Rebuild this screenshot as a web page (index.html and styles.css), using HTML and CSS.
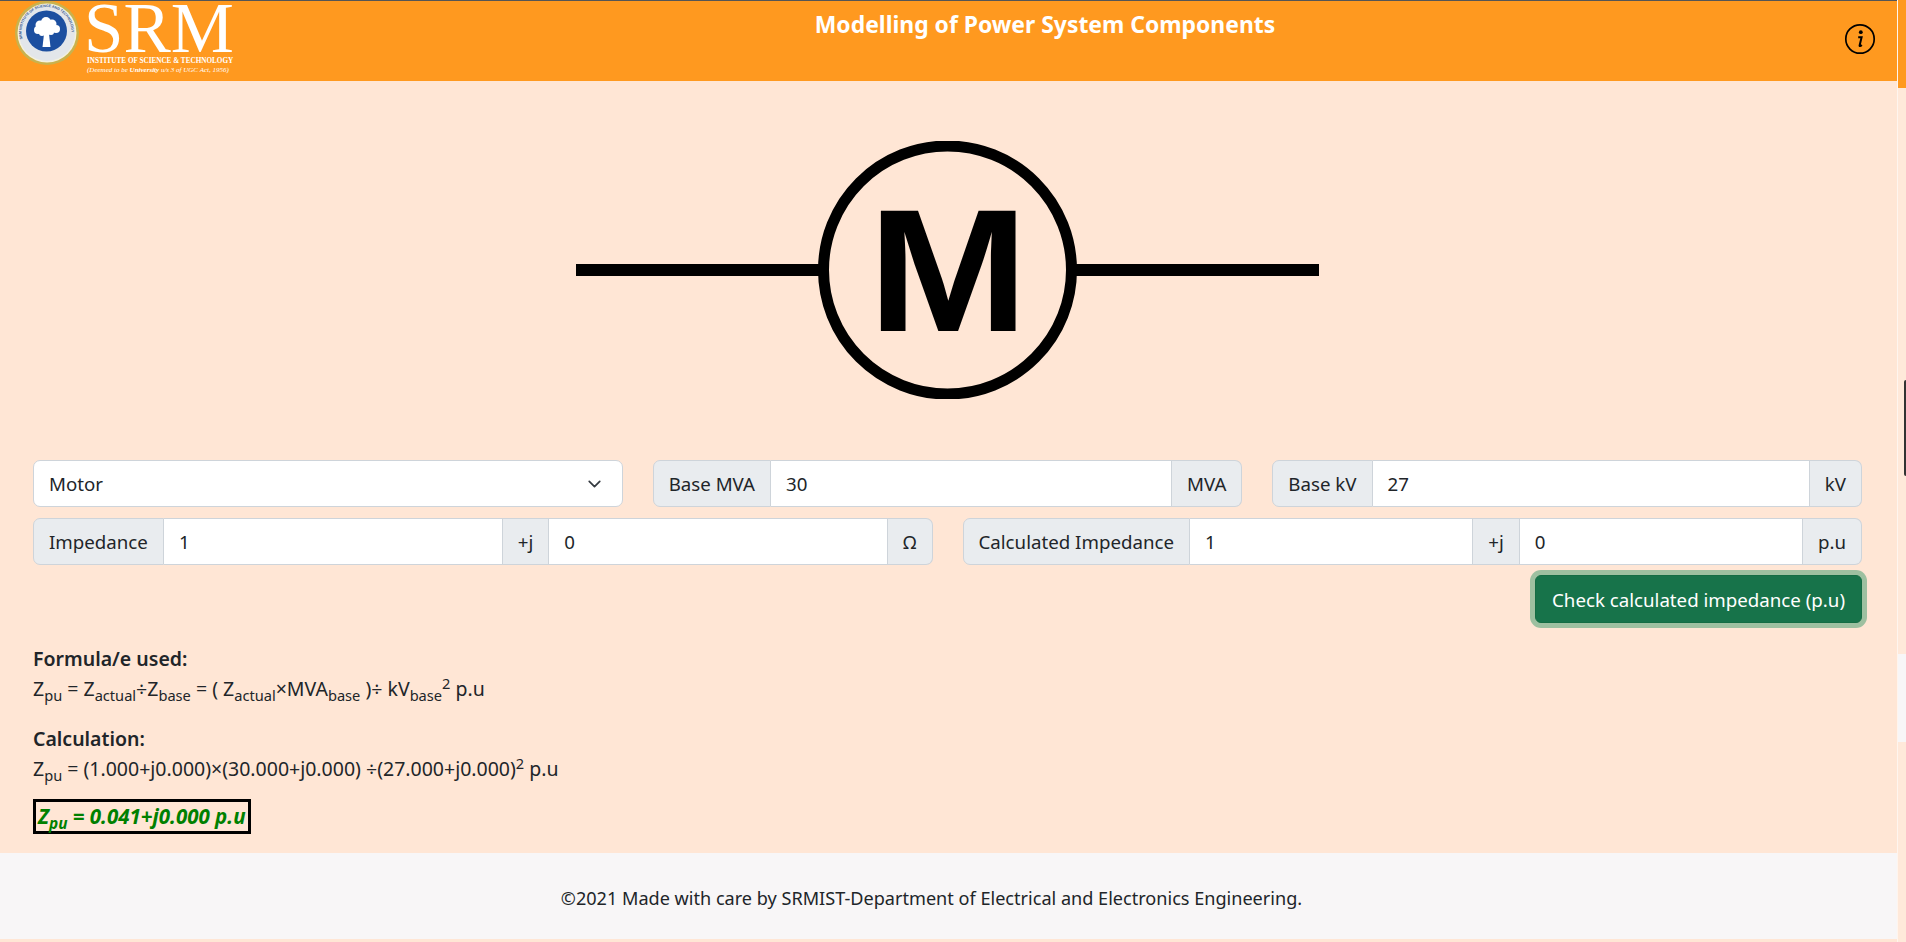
FILE: index.html
```html
<!DOCTYPE html>
<html lang="en">
<head>
    <meta charset="UTF-8">
    <meta name="viewport" content="width=device-width, initial-scale=1.0">
    <title>Modelling of Power System Components</title>
    <link rel="stylesheet" href="styles.css">
</head>
<body>
    <div class="page">
        <header class="topbar">
            <div class="logo">
                <svg class="seal" width="66" height="66" viewBox="0 0 66 66">
                    <defs>
                        <path id="seal-ring" d="M8.500 38a25 25 0 1 1 48 0"/>
                    </defs>
                    <circle cx="33" cy="32" r="32" fill="#c9b24e"/>
                    <circle cx="33" cy="32" r="29.500" fill="#f4f1df"/>
                    <circle cx="33" cy="32" r="28" fill="#e3e6ea"/>
                    <text class="seal-text"><textPath href="#seal-ring">SRM INSTITUTE OF SCIENCE AND TECHNOLOGY</textPath></text>
                    <circle cx="32.500" cy="30" r="20.500" fill="#1c4fa0"/>
                    <path d="M30 33h5l1.500 13h-8z" fill="#ffffff"/>
                    <g fill="#ffffff">
                        <circle cx="24" cy="29" r="4"/>
                        <circle cx="26" cy="24" r="4.500"/>
                        <circle cx="32" cy="21" r="5"/>
                        <circle cx="38" cy="23" r="4.500"/>
                        <circle cx="42" cy="28" r="4"/>
                        <circle cx="33" cy="27" r="7"/>
                        <circle cx="37" cy="31" r="3"/>
                        <circle cx="28" cy="32" r="3"/>
                    </g>
                </svg>
                <div class="wordmark">
                    <div class="wordmark-srm">SRM</div>
                    <div class="wordmark-inst">INSTITUTE OF SCIENCE &amp; TECHNOLOGY</div>
                    <div class="wordmark-note">(Deemed to be <b>University</b> u/s 3 of UGC Act, 1956)</div>
                </div>
            </div>
            <h1 class="title">Modelling of Power System Components</h1>
            <svg class="info" width="32" height="32" viewBox="0 0 32 32">
                <circle cx="16" cy="16" r="14.200" fill="none" stroke="#000" stroke-width="1.700"/>
                <circle cx="16.800" cy="9.200" r="1.900" fill="#000"/>
                <path d="M14.200 14.200h3.400l-2 8.200c-.2.9.7 1 2.200-.4" fill="none" stroke="#000" stroke-width="2"/>
            </svg>
        </header>

        <main class="content">
            <svg class="diagram" width="743" height="258" viewBox="0 0 743 258">
                <rect x="0" y="123" width="243" height="12" fill="#000"/>
                <rect x="500" y="123" width="243" height="12" fill="#000"/>
                <circle cx="371.500" cy="129" r="124" fill="none" stroke="#000" stroke-width="11"/>
                <text class="diagram-letter" transform="translate(292 190) scale(1.100 1)">M</text>
            </svg>

            <div class="row row-three">
                <select class="field-select">
                    <option>Motor</option>
                </select>
                <div class="input-group">
                    <span class="addon">Base MVA</span>
                    <input type="text" value="30">
                    <span class="addon">MVA</span>
                </div>
                <div class="input-group">
                    <span class="addon">Base kV</span>
                    <input type="text" value="27">
                    <span class="addon">kV</span>
                </div>
            </div>

            <div class="row row-two">
                <div class="input-group">
                    <span class="addon">Impedance</span>
                    <input type="text" value="1">
                    <span class="addon">+j</span>
                    <input type="text" value="0">
                    <span class="addon">Ω</span>
                </div>
                <div class="input-group">
                    <span class="addon">Calculated Impedance</span>
                    <input type="text" value="1">
                    <span class="addon">+j</span>
                    <input type="text" value="0">
                    <span class="addon">p.u</span>
                </div>
            </div>

            <div class="actions">
                <button class="btn-check">Check calculated impedance (p.u)</button>
            </div>

            <section class="working">
                <p class="working-head">Formula/e used:</p>
                <p class="working-line">Z<sub>pu</sub> = Z<sub>actual</sub>÷Z<sub>base</sub> = ( Z<sub>actual</sub>×MVA<sub>base</sub> )÷ kV<sub>base</sub><sup>2</sup> p.u</p>
                <p class="working-head second">Calculation:</p>
                <p class="working-line">Z<sub>pu</sub> = (1.000+j0.000)×(30.000+j0.000) ÷(27.000+j0.000)<sup>2</sup> p.u</p>
                <p class="result">Z<sub>pu</sub> = 0.041+j0.000 p.u</p>
            </section>
        </main>

        <footer class="footer">©2021 Made with care by SRMIST-Department of Electrical and Electronics Engineering.</footer>
    </div>

    <div class="rail">
        <div class="rail-top"></div>
        <div class="rail-thumb"></div>
        <div class="rail-patch"></div>
    </div>
</body>
</html>
```

FILE: styles.css
```css
html, body {
    height: 100%;
}
body {
    margin: 0;
    display: flex;
    height: 942px;
    overflow: hidden;
    background-color: #ffe6d5;
    color: #212529;
    font-family: "Noto Sans", Arial, sans-serif;
    font-size: 18.7px;
}
.page {
    width: 1897px;
    flex: none;
    display: flex;
    flex-direction: column;
}

/* top bar */
.topbar {
    display: flex;
    align-items: flex-start;
    height: 80px;
    border-top: 1px solid #555555;
    background-color: #ff991f;
}
.logo {
    display: flex;
    flex: none;
    width: 233px;
    padding-left: 14px;
    box-sizing: border-box;
    gap: 7px;
}
.seal {
    flex: none;
}
.seal-text {
    fill: #35568f;
    font-family: "Liberation Sans", Arial, sans-serif;
    font-size: 3.600px;
    font-weight: bold;
}
.wordmark {
    padding-top: 1px;
    color: #ffffff;
    font-family: "Liberation Serif", serif;
    white-space: nowrap;
}
.wordmark-srm {
    height: 53px;
    margin-left: -3px;
    font-size: 71px;
    line-height: 53px;
}
.wordmark-inst {
    margin-top: 1px;
    font-size: 7.200px;
    font-weight: bold;
    line-height: 10px;
}
.wordmark-note {
    font-size: 7px;
    font-style: italic;
    line-height: 9px;
}
.title {
    flex: 1;
    margin: 9px 0 0;
    padding-left: 13px;
    text-align: center;
    color: #ffffff;
    font-size: 22.900px;
    font-weight: 700;
    line-height: 29px;
}
.info {
    flex: none;
    margin: 22px 21px 0 0;
}

/* main */
.content {
    flex: 1;
    padding: 60px 35px 0 33px;
}
.diagram {
    display: block;
    margin: 0 0 61px 543px;
}
.diagram-letter {
    font-family: "Liberation Sans", Arial, sans-serif;
    font-weight: bold;
    font-size: 175px;
}
.row {
    display: grid;
    column-gap: 30px;
    margin-bottom: 11px;
}
.row-three {
    grid-template-columns: 1fr 1fr 1fr;
}
.row-two {
    grid-template-columns: 1fr 1fr;
}
.field-select {
    height: 47px;
    padding: 0 15px;
    border: 1px solid #ced4da;
    border-radius: 7px;
    background-color: #ffffff;
    background-image: url("data:image/svg+xml,%3csvg xmlns='http://www.w3.org/2000/svg' viewBox='0 0 16 16'%3e%3cpath fill='none' stroke='%23343a40' stroke-linecap='round' stroke-linejoin='round' stroke-width='2' d='M2 5l6 6 6-6'/%3e%3c/svg%3e");
    background-repeat: no-repeat;
    background-position: right 18px center;
    background-size: 19px 14px;
    appearance: none;
    color: #212529;
    font: inherit;
}
.input-group {
    display: flex;
    height: 47px;
    min-width: 0;
}
.input-group input {
    flex: 1;
    min-width: 0;
    padding: 0 15px;
    border: 1px solid #ced4da;
    border-left: 0;
    border-radius: 0;
    background-color: #ffffff;
    color: #212529;
    font: inherit;
}
.addon {
    display: flex;
    align-items: center;
    flex: none;
    padding: 0 15px;
    border: 1px solid #ced4da;
    border-left: 0;
    background-color: #e9ecef;
    white-space: nowrap;
}
.addon:first-child {
    border-left: 1px solid #ced4da;
    border-radius: 7px 0 0 7px;
}
.addon:last-child {
    border-radius: 0 7px 7px 0;
}
.actions {
    display: flex;
    justify-content: flex-end;
    margin-top: -1px;
}
.btn-check {
    height: 48px;
    padding: 0 16px;
    border: 1px solid #146c43;
    border-radius: 6px;
    background-color: #17734a;
    box-shadow: 0 0 0 5px #9dc0a0;
    color: #ffffff;
    font: inherit;
}

/* working */
.working {
    margin-top: 21px;
    font-size: 19.500px;
}
.working p {
    margin: 0;
}
.working-head {
    font-weight: 600;
    line-height: 29px;
}
.working-head.second {
    margin-top: 20px;
}
.working p.working-line {
    margin-top: 1px;
    line-height: 30px;
}
.working-line sub, .working-line sup, .result sub {
    font-size: 75%;
    line-height: 0;
}
.working p.result {
    display: inline-block;
    margin-top: 15px;
    padding: 0 2px;
    border: 3px solid #000000;
    color: #008000;
    font-size: 20.500px;
    font-weight: 700;
    font-style: italic;
    line-height: 29px;
}

.footer {
    height: 86px;
    margin-bottom: 3px;
    padding-right: 34px;
    padding-top: 3px;
    box-sizing: border-box;
    display: flex;
    align-items: center;
    justify-content: center;
    background-color: #f8f6f7;
    font-size: 18.100px;
}

/* right hand strip */
.rail {
    flex: 1;
    display: flex;
    flex-direction: column;
    align-items: flex-end;
    border-left: 1px solid #fff5ee;
    background-color: #ffe9da;
}
.rail-top {
    width: 100%;
    height: 88px;
    background-color: #ff991f;
}
.rail-thumb {
    width: 2px;
    height: 96px;
    margin-top: 292px;
    border-radius: 2px 0 0 2px;
    background-color: #333333;
}
.rail-patch {
    width: 100%;
    height: 88px;
    margin-top: 178px;
    background-color: #f8f6f7;
}
```
